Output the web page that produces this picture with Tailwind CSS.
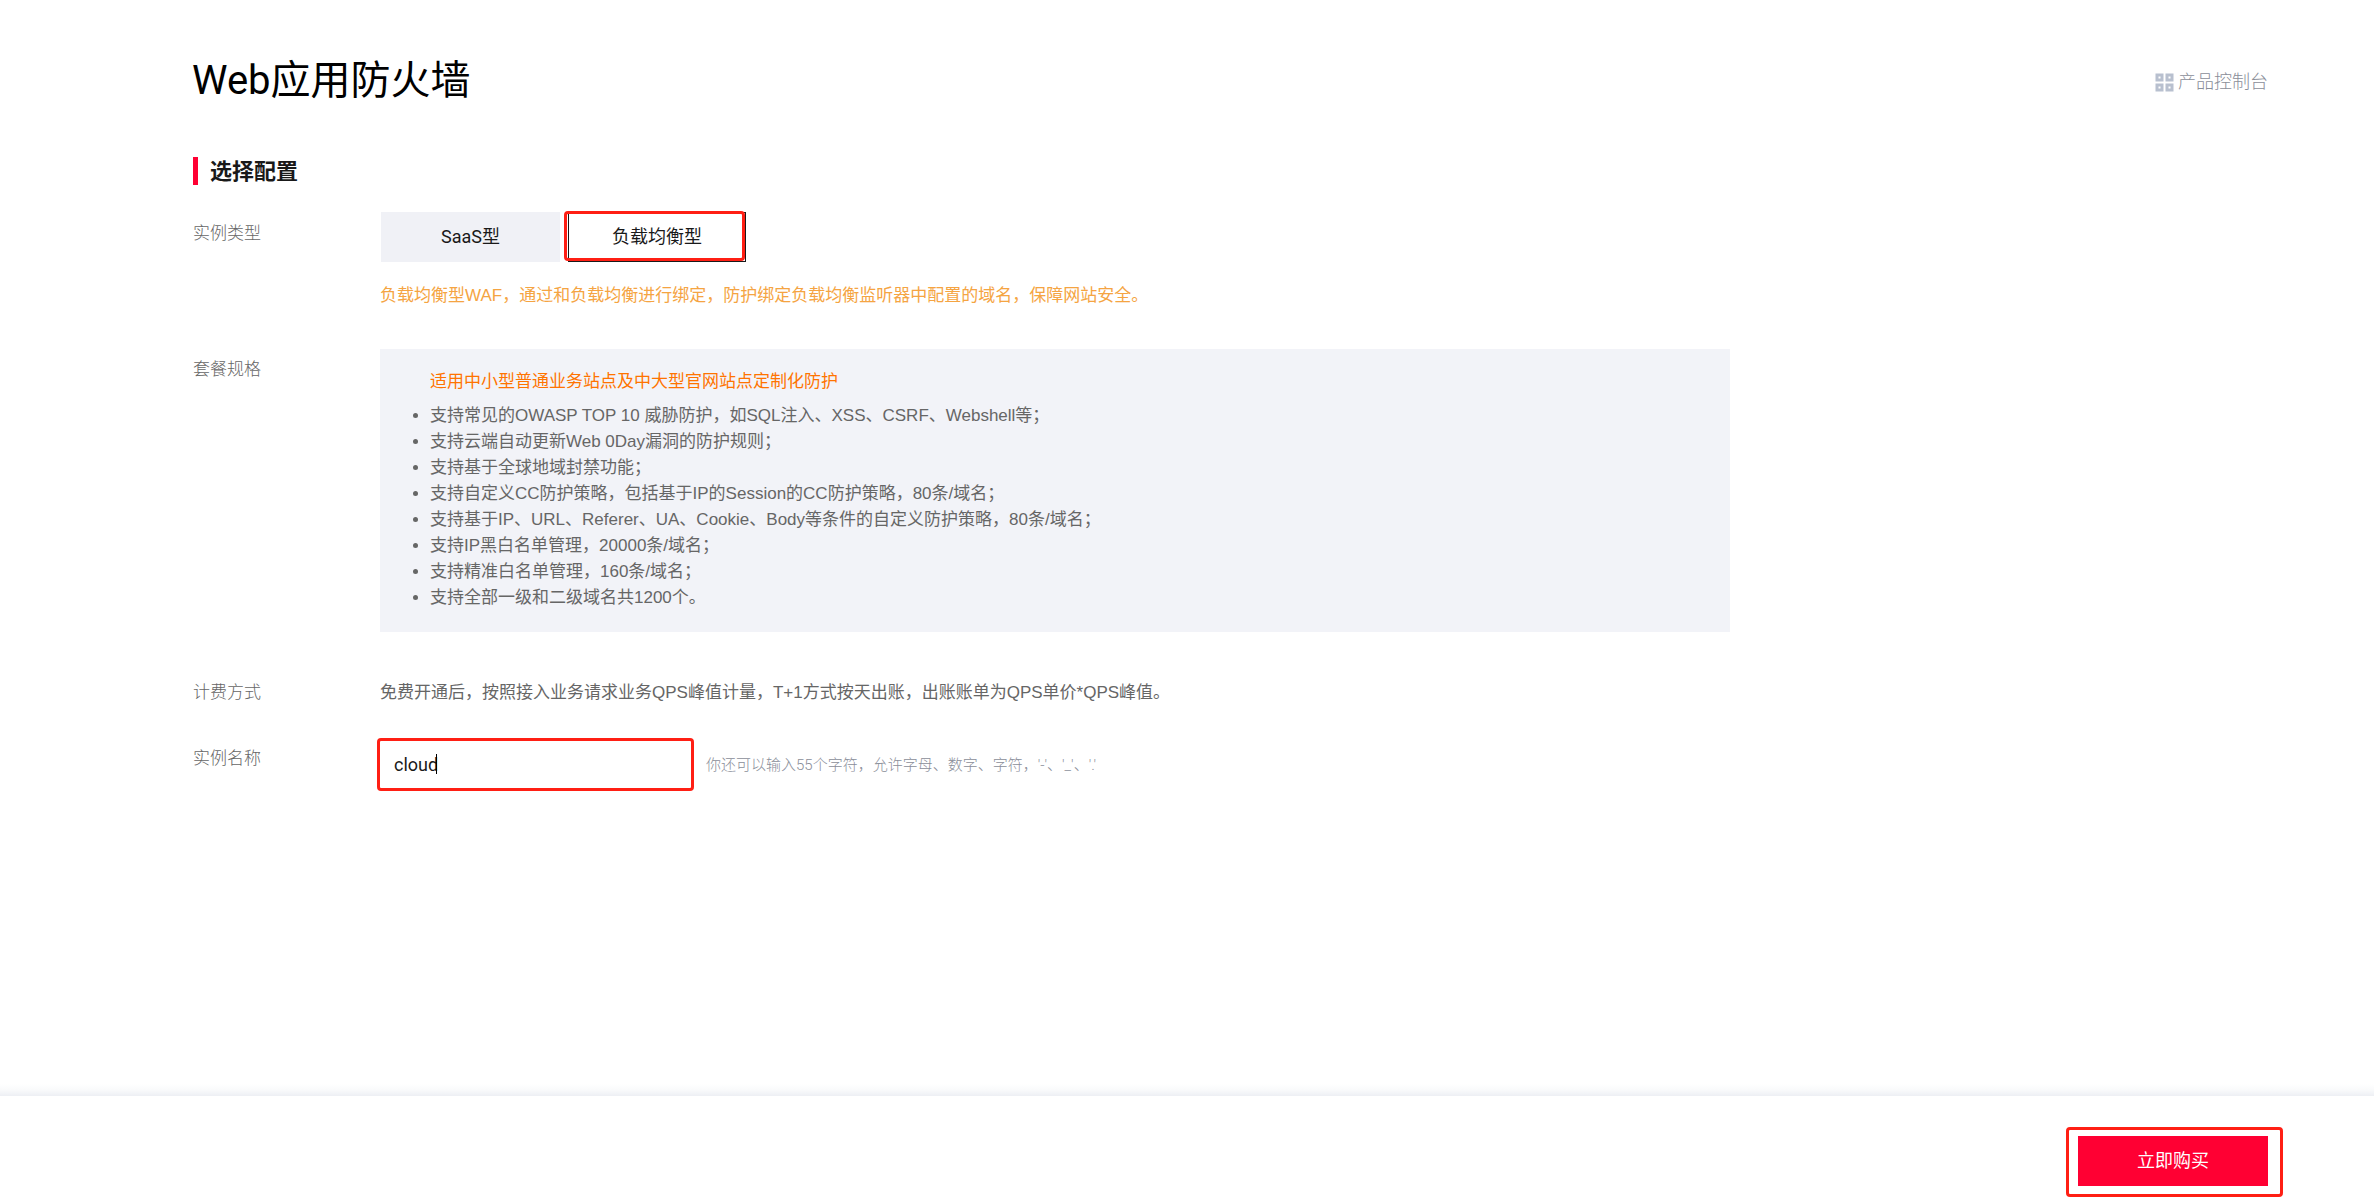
<!DOCTYPE html>
<html lang="zh-CN">
<head>
  <meta charset="UTF-8" />
  <meta name="viewport" content="width=device-width, initial-scale=1.0" />
  <title>Web应用防火墙</title>
  <script src="https://cdn.jsdelivr.net/npm/@tailwindcss/browser@4"></script>
</head>
<body class="min-h-screen flex flex-col bg-white text-[17px] leading-[26px] text-[#666] font-['Liberation_Sans','Noto_Sans_CJK_SC',sans-serif]">

  <!-- Header -->
  <header class="flex items-center justify-between pt-[51px] pl-[192px] pr-[106px]">
    <h1 class="text-[40px] leading-[60px] text-black font-['Roboto','Noto_Sans_CJK_SC',sans-serif]">Web应用防火墙</h1>
    <a href="#" class="flex items-center gap-1 pt-0.5 text-[18px] font-light text-[#8a8e99]">
      <svg class="w-[19px] h-[19px]" viewBox="0 0 19 19" fill="none" stroke="#b8c0cf" stroke-width="3">
        <rect x="2" y="2" width="5" height="5" />
        <rect x="12" y="2" width="5" height="5" />
        <rect x="2" y="12" width="5" height="5" />
        <rect x="12" y="12" width="5" height="5" />
      </svg>
      产品控制台
    </a>
  </header>

  <main class="flex-1 pl-[193px] pr-12">
    <h2 class="mt-[46px] border-l-[5px] border-[#ff0033] pt-0.5 pl-3 text-[22px] leading-[26px] font-bold text-[#191919]">选择配置</h2>

    <!-- Instance type -->
    <section class="mt-[27px] flex">
      <h3 class="w-[187px] pt-[9px] font-light">实例类型</h3>
      <div class="flex-1">
        <div class="flex gap-2 pl-px text-[#191919] text-[18px] font-['Roboto','Noto_Sans_CJK_SC',sans-serif]">
          <button type="button" class="w-[179px] h-[50px] bg-[#f0f1f6]">SaaS型</button>
          <div class="relative">
            <button type="button" class="block w-[178px] h-[50px] border border-[#191919] bg-white">负载均衡型</button>
            <span class="absolute -top-px -left-1 right-px bottom-px border-3 border-[#ff1f14] rounded pointer-events-none"></span>
          </div>
        </div>
        <p class="mt-[21px] text-[#f5a442]">负载均衡型WAF，通过和负载均衡进行绑定，防护绑定负载均衡监听器中配置的域名，保障网站安全。</p>
      </div>
    </section>

    <!-- Package -->
    <section class="mt-10 flex">
      <h3 class="w-[187px] pt-2 font-light">套餐规格</h3>
      <div class="flex-1 max-w-[1350px] bg-[#f2f3f8] py-5 pl-[50px]">
        <p class="mb-2 text-[#ff7300]">适用中小型普通业务站点及中大型官网站点定制化防护</p>
        <ul class="list-disc pb-px">
          <li>支持常见的OWASP TOP 10 威胁防护，如SQL注入、XSS、CSRF、Webshell等；</li>
          <li>支持云端自动更新Web 0Day漏洞的防护规则；</li>
          <li>支持基于全球地域封禁功能；</li>
          <li>支持自定义CC防护策略，包括基于IP的Session的CC防护策略，80条/域名；</li>
          <li>支持基于IP、URL、Referer、UA、Cookie、Body等条件的自定义防护策略，80条/域名；</li>
          <li>支持IP黑白名单管理，20000条/域名；</li>
          <li>支持精准白名单管理，160条/域名；</li>
          <li>支持全部一级和二级域名共1200个。</li>
        </ul>
      </div>
    </section>

    <!-- Billing -->
    <section class="mt-12 flex">
      <h3 class="w-[187px] font-light">计费方式</h3>
      <p class="flex-1">免费开通后，按照接入业务请求业务QPS峰值计量，T+1方式按天出账，出账账单为QPS单价*QPS峰值。</p>
    </section>

    <!-- Instance name -->
    <section class="mt-8 flex">
      <label for="instance-name" class="w-[184px] pt-2 font-light">实例名称</label>
      <div class="flex items-center gap-3">
        <div class="relative">
          <input id="instance-name" type="text" value="cloud" class="block w-[317px] h-[53px] px-[14px] border-3 border-[#ff1f14] rounded bg-white text-[18px] text-[#191919] outline-none font-['Roboto','Noto_Sans_CJK_SC',sans-serif]">
          <!-- Text cursor -->
          <span class="absolute left-[59px] top-4 w-px h-5 bg-black pointer-events-none"></span>
        </div>
        <span class="text-[15px] font-light text-[#8a8e99] font-['Roboto','Noto_Sans_CJK_SC',sans-serif]">你还可以输入55个字符，允许字母、数字、字符，'-'、'_'、'.'</span>
      </div>
    </section>
  </main>

  <!-- Buy bar -->
  <footer>
    <div class="h-3 bg-linear-to-t from-[#edeff4] via-[#f9fafb] to-white"></div>
    <div class="flex justify-end pt-[31px] pr-[91px] pb-[3px]">
      <div class="border-3 border-[#ff1f14] rounded pt-[6px] pr-3 pb-2 pl-[9px]">
        <button type="button" class="block w-[190px] h-[50px] bg-[#ff0033] text-[18px] text-white">立即购买</button>
      </div>
    </div>
  </footer>

</body>
</html>
